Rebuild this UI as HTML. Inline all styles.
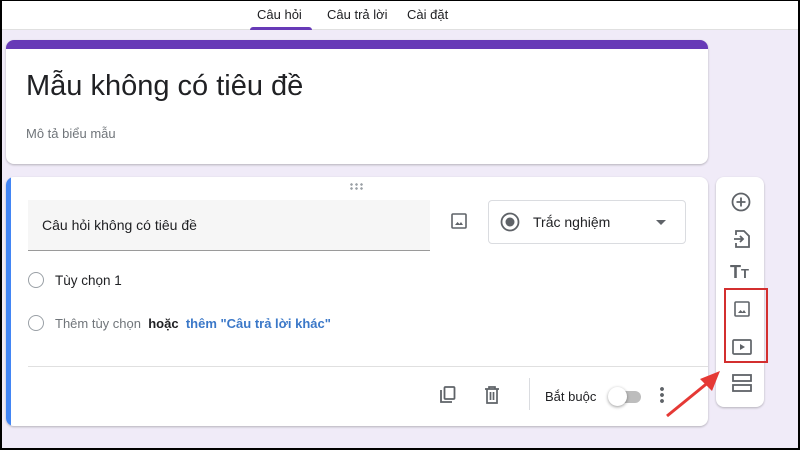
<!DOCTYPE html>
<html><head><meta charset="utf-8"><style>
*{margin:0;padding:0;box-sizing:border-box}
body{width:800px;height:450px;overflow:hidden;font-family:"Liberation Sans","Noto Sans CJK SC",sans-serif;background:#000;position:relative}
.frame{position:absolute;left:2px;top:1px;width:796px;height:447px;background:#f0ebf8;overflow:hidden}
.hdr{position:absolute;left:0;top:0;width:796px;height:29px;background:#fff;border-bottom:1px solid #e0e0e0}
.tab{position:absolute;top:6px;font-size:13px;color:#202124}
.ul{position:absolute;left:248px;top:26px;width:62px;height:3px;background:#673ab7;border-radius:3px 3px 0 0}
.card{position:absolute;background:#fff;border-radius:8px;box-shadow:0 1px 2px rgba(0,0,0,.25)}
.abs{position:absolute}
</style></head><body><div class="frame">
<div class="hdr"></div>
<div class="tab" style="left:255px">Câu hỏi</div>
<div class="tab" style="left:325px">Câu trả lời</div>
<div class="tab" style="left:405px">Cài đặt</div>
<div class="ul"></div>

<div class="card" style="left:4px;top:39px;width:702px;height:124px;overflow:hidden">
 <div class="abs" style="left:0;top:0;width:702px;height:9px;background:#673ab7"></div>
 <div class="abs" style="left:20px;top:30px;font-size:29px;color:#202124">Mẫu không có tiêu đề</div>
 <div class="abs" style="left:20px;top:86px;font-size:13px;color:#70757a">Mô tả biểu mẫu</div>
</div>

<div class="card" style="left:4px;top:176px;width:702px;height:249px;overflow:hidden">
 <div class="abs" style="left:0;top:0;width:5px;height:249px;background:#4285f4"></div>
 <div class="abs" style="left:344px;top:6px;width:14px;height:8px;background:radial-gradient(circle at 1.5px 1.5px,#9aa0a6 1.2px,transparent 1.4px) 0 0/5px 4px"></div>
 <div class="abs" style="left:22px;top:23px;width:402px;height:51px;background:#f6f6f6;border-bottom:1px solid #9a9a9a"></div>
 <div class="abs" style="left:36px;top:40px;font-size:14px;color:#202124">Câu hỏi không có tiêu đề</div>
 <svg class="abs" style="left:444px;top:35px" width="18" height="18" viewBox="0 0 18 18"><rect x="2" y="2" width="14" height="14" rx="1" fill="none" stroke="#5f6368" stroke-width="1.6"/><path d="M5 13l2.5-3 2 2 1.5-2 2 3z" fill="#5f6368"/></svg>
 <div class="abs" style="left:482px;top:23px;width:198px;height:44px;border:1px solid #dadce0;border-radius:4px"></div>
 <svg class="abs" style="left:494px;top:35px" width="20" height="20"><circle cx="10" cy="10" r="8.5" fill="none" stroke="#5f6368" stroke-width="1.8"/><circle cx="10" cy="10" r="4.5" fill="#5f6368"/></svg>
 <div class="abs" style="left:527px;top:37px;font-size:14px;color:#202124">Trắc nghiệm</div>
 <div class="abs" style="left:650px;top:43px;width:0;height:0;border-left:5px solid transparent;border-right:5px solid transparent;border-top:5px solid #5f6368"></div>
 <div class="abs" style="left:22px;top:95px;width:16px;height:16px;border:1.5px solid #9aa0a6;border-radius:50%"></div>
 <div class="abs" style="left:49px;top:96px;font-size:13.5px;color:#202124">Tùy chọn 1</div>
 <div class="abs" style="left:22px;top:138px;width:16px;height:16px;border:1.5px solid #9aa0a6;border-radius:50%"></div>
 <div class="abs" style="left:49px;top:139px;font-size:13px;color:#70757a">Thêm tùy chọn <b style="color:#202124;font-weight:600">&nbsp;hoặc</b> <span style="color:#3b78c8;font-weight:600">&nbsp;thêm "Câu trả lời khác"</span></div>
 <div class="abs" style="left:22px;top:189px;width:680px;height:1px;background:#e0e0e0"></div>
 <svg class="abs" style="left:432px;top:208px" width="20" height="20" viewBox="0 0 20 20"><path d="M3 5v12h11" fill="none" stroke="#5f6368" stroke-width="1.8"/><rect x="6.5" y="2" width="10" height="12" rx="1" fill="none" stroke="#5f6368" stroke-width="1.8"/></svg>
 <svg class="abs" style="left:477px;top:208px" width="18" height="20" viewBox="0 0 18 20"><path d="M2 4h14M6 4V2h6v2M4 4v14h10V4M7.5 7v8M10.5 7v8" fill="none" stroke="#5f6368" stroke-width="1.7"/></svg>
 <div class="abs" style="left:523px;top:201px;width:1px;height:32px;background:#dadce0"></div>
 <div class="abs" style="left:539px;top:212px;font-size:13px;color:#202124">Bắt buộc</div>
 <div class="abs" style="left:605px;top:214px;width:30px;height:12px;background:#bdbdbd;border-radius:6px"></div>
 <div class="abs" style="left:602px;top:210px;width:19px;height:19px;background:#fff;border-radius:50%;box-shadow:0 1px 3px rgba(0,0,0,.4)"></div>
 <div class="abs" style="left:654px;top:210px;width:4px;height:18px;background:radial-gradient(circle at 2px 2px,#5f6368 1.8px,transparent 2px) 0 0/4px 6px"></div>
</div>

<div class="card" style="left:714px;top:176px;width:48px;height:230px"></div>
<svg class="abs" style="left:728px;top:190px" width="22" height="22"><circle cx="11" cy="11" r="8.5" fill="none" stroke="#5f6368" stroke-width="1.8"/><path d="M11 6.5v9M6.5 11h9" stroke="#5f6368" stroke-width="1.8"/></svg>
<svg class="abs" style="left:730px;top:227px" width="20" height="22" viewBox="0 0 20 22"><path d="M4 7V3h8l5 5v11H4v-4" fill="none" stroke="#5f6368" stroke-width="1.8"/><path d="M2 11h9M8 8l3 3-3 3" fill="none" stroke="#5f6368" stroke-width="1.8"/></svg>
<div class="abs" style="left:728px;top:261px;font-size:18px;font-weight:bold;color:#5f6368">T<span style="font-size:13px">T</span></div>
<div class="abs" style="left:722px;top:287px;width:44px;height:75px;border:2px solid #d32f2f"></div>
<svg class="abs" style="left:731px;top:299px" width="18" height="18" viewBox="0 0 18 18"><rect x="2" y="2" width="14" height="14" rx="1" fill="none" stroke="#5f6368" stroke-width="1.6"/><path d="M5 13l2.5-3 2 2 1.5-2 2 3z" fill="#5f6368"/></svg>
<svg class="abs" style="left:729px;top:337px" width="22" height="18" viewBox="0 0 22 18"><rect x="2" y="2" width="18" height="14" rx="1" fill="none" stroke="#5f6368" stroke-width="1.7"/><path d="M9 6v6l5-3z" fill="#5f6368"/></svg>
<svg class="abs" style="left:729px;top:372px" width="22" height="20" viewBox="0 0 22 20"><rect x="2" y="2" width="18" height="6" fill="none" stroke="#5f6368" stroke-width="1.8"/><rect x="2" y="12" width="18" height="6" fill="none" stroke="#5f6368" stroke-width="1.8"/></svg>
<svg class="abs" style="left:660px;top:360px" width="62" height="60"><path d="M5 55L48 20" stroke="#e53935" stroke-width="3"/><path d="M58 10L38 18 50 30z" fill="#e53935"/></svg>
</div></body></html>
